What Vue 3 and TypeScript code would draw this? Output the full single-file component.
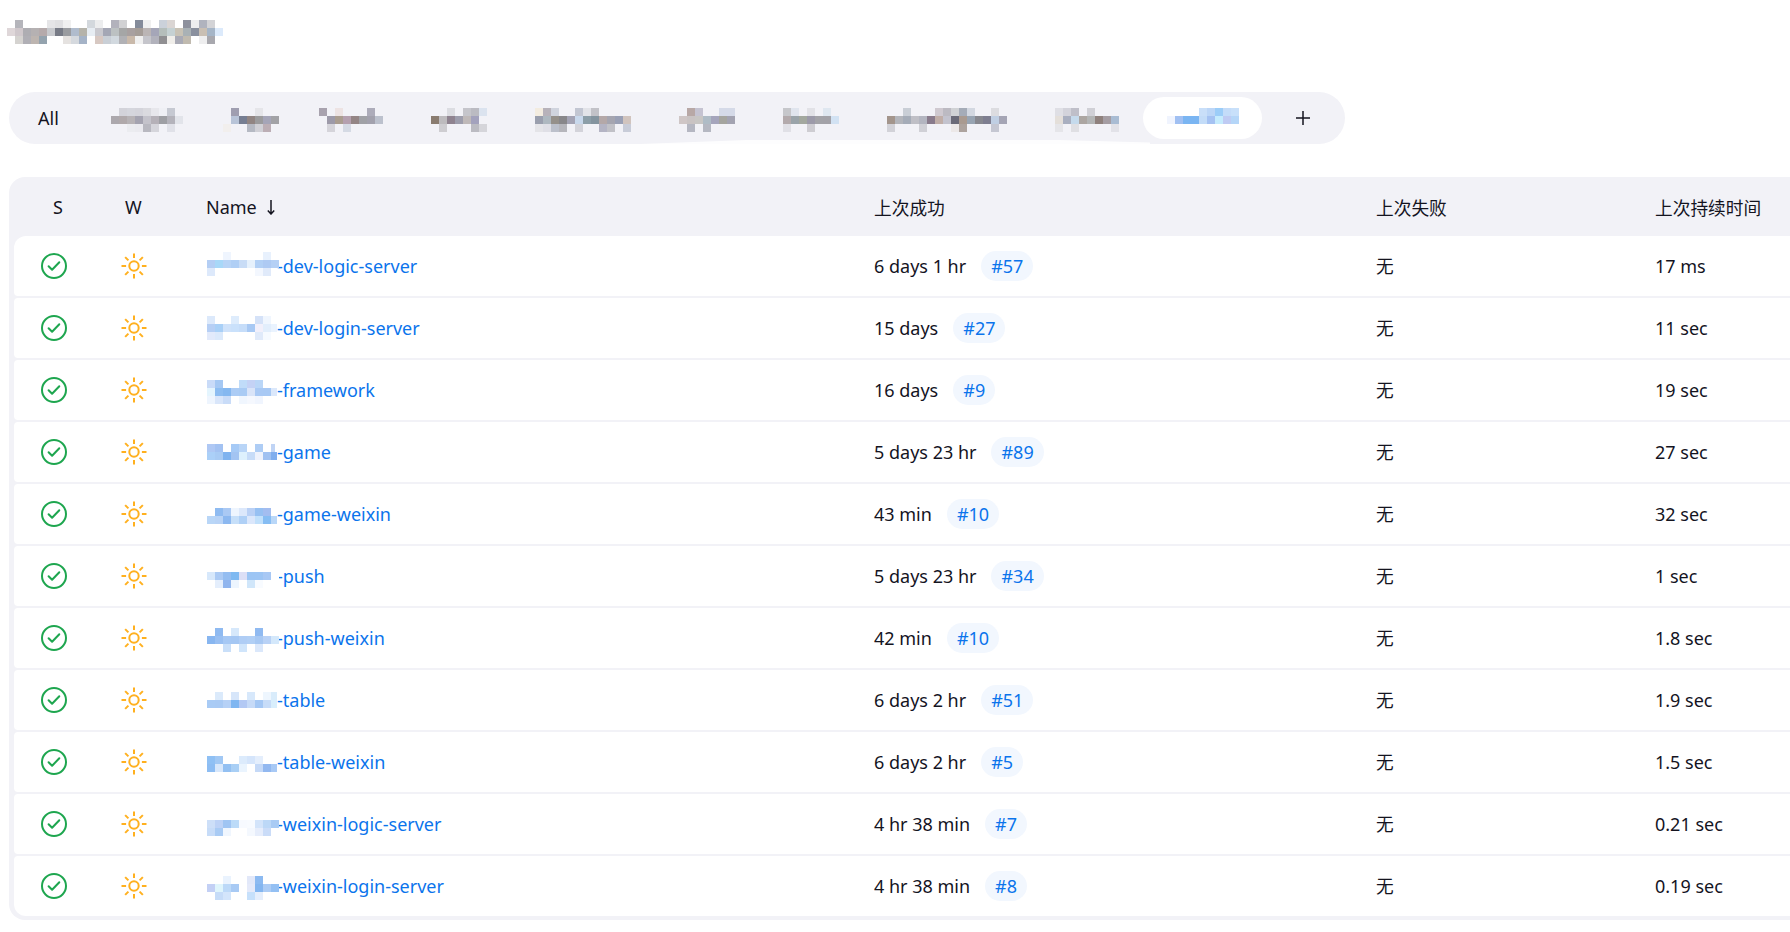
<script setup lang="ts">
interface Cell {
  x: number;
  y: number;
  w: number;
  fill: string;
}

interface Job {
  mosaic: Cell[];
  name: string;
  since: string;
  build: string;
  duration: string;
}

// pixelated patches: one string per row, "-" leaves the block empty, "hex/6" is a cut-off block
const BLOCK = 8;

function toCells(rows: string[], top = 0): Cell[] {
  const cells: Cell[] = [];
  rows.forEach((row, r) => {
    row.split(" ").forEach((token, c) => {
      if (token === "-") return;
      const [fill, w] = token.split("/");
      cells.push({x: c * BLOCK, y: top + r * BLOCK, w: w ? Number(w) : BLOCK, fill: "#" + fill});
    });
  });
  return cells;
}

const titleCells = toCells([
  "- b5b5bb - - - e5e5e7 e0e0e2 f0f0f0 - - d3d8dd ecedee - b2b2bc d1d1d3 - 848b9a f0f0f0 - cbd1da dad5d3 - 8e919d eeeeef b0b3be d3d3d6 -",
  "dfd7d9 d0c8cc aeadb2 b5b1b2 b5aaab c7c9cd 777b86 9a9ca0 b0bccd b5b3aa e7edf3 c9c9cf a4a7b5 bcc1c2 a5a6a6 a8a0a0 a59d98 bbb5b5 a5a6b8 b5bebb c5d1d3 c8c2b5 a9b1b5 8a909e c9bfb3 a5b5c7 dceafb",
  "- d5d3d0 b0afb5 bdb5b0 94a3ae - - e5e2e0 d5d9de a5b3c7 - d7c8c2 c9cfd6 d2d9df b1b1b5 c9b9aa f0f0f0 c5c5cb b2b2bc 908f92 f0eeea a9aab5 c0baaf - eeeeef a8a8ae -",
]);

const tabs = [
  {
    width: 64,
    cells: toCells([
      "- d3d3da d5d6dd d4d4db dadadf e7e7ec eff0f5 c6c9d2 -",
      "aca8ad b0a9ab b7b3b6 a4a3b0 c4c3cb b5b1b8 9e9fa4 b4b3bb e2e4ea",
      "- - ebecf0 eaeaef b8b8c0 d5d5db - e0e1e8 -",
    ]),
  },
  {
    width: 48,
    cells: toCells([
      "- 9f9eb0 - - e5e5e9 - -",
      "- b8c4d8 767e92 918583 9b9b9d a5a5b8 a2a2a6",
      "f2efed - - b5b9c3 d0d0d6 bcaeb5 -",
    ]),
  },
  {
    width: 64,
    cells: toCells([
      "a8a2ae - ede3e3 - - - adacba -",
      "- 9d9aa9 aa9d90 b5a0af 948585 a0a1a6 a2a1ad bcc1cd",
      "- d5d4da - d5dae4 - - - -",
    ]),
  },
  {
    width: 56,
    cells: toCells([
      "- - dcdde2 - c5c5cb bbbbc2 dbe3ef",
      "8a7c70 bdbbbe 8f8390 9d9dac bfb9b9 a3a2bd -",
      "- cecdd1 - - - bbbbc2 d5d5da",
    ]),
  },
  {
    width: 96,
    cells: toCells([
      "f3ece0 b7b2ba d0d4de - - c2c6d2 e2e3e8 c2c2c8 - - - -",
      "9a9fae aeb8c0 95908a 88878a a3a3b4 c8d8ec 8c9ea8 84949f b4a8a8 a5a5b0 9aa0b5 d1c4be",
      "e4e4e8 dfdfe6 bcc0cb b6b6bc - d3d3da - - b4b4c4 c1c1c7 - c8ccd8",
    ]),
  },
  {
    width: 56,
    cells: toCells([
      "- b8a8a6 c5c3d1 - - d5dae8 d5dae8",
      "cfc6c6 c9c3c3 c8c6c4 afbcc6 a5a5bc a5a59f a3a3b1",
      "- b5b7c2 - b5b8c2 - - -",
    ]),
  },
  {
    width: 56,
    cells: toCells([
      "c6c7cb e0e5ee - e2e2e7 - dfe7f0 -",
      "b3aaac 9aa4aa a3a89f 9c9aa9 a3a3a8 a3a2a8 d2e2f3",
      "e0e0e6 - - cecdd2 - - -",
    ]),
  },
  {
    width: 120,
    cells: toCells([
      "- - c9ced6 - - - cfc9d0 bcbac2 d0d2d5 a5acb8 d3d8e1 - - dcdce0 -",
      "a3958c b3b5bb a5acb8 bfbfc6 b3b5c0 897b8c c0aea8 c3c3ce 6a6a78 a99a90 98a4b2 87888f 7e7e90 c0cfe3 a5a5b5",
      "d2d2d8 - - - d0d0d6 - - - ece8e8 ada39e - - - c5c7d2 -",
    ]),
  },
  {
    width: 64,
    cells: toCells([
      "dfdfe5 d3d3db bfbfc9 - d0d0d6 - - -",
      "e4dfda a9afc0 c5daec aca6a2 b3b5b5 8f817d a59da3 a9bcd3",
      "e5e5e9 - dfdfe3 - - - - e2e2e8",
    ]),
  },
  {
    width: 72,
    active: true,
    cells: toCells([
      "- - - - c9dff9 bcd6f7 9ccdf8 c4dcf9 c8e0fa",
      "f0f4fe a1c0f2 7ab5f2 7ab5f2 c3dcf8 a5c2f2 c5ebfd bfcbf3 b5d6f8",
    ]),
  },
];

const jobs: Job[] = [
  {
    name: "dev-logic-server", since: "6 days 1 hr", build: "#57", duration: "17 ms",
    mosaic: toCells([
      "- - eff5fe - - - - e8f1fd -",
      "b4cef4 a8d8f8 b8d4f6 b0cff5 c8dcf6 e6f1fc b2d0f5 aecaf3 b5d0f5",
      "dde9fb - - - - - f3f7fe e0eafa -",
    ], 16),
  },
  {
    name: "dev-login-server", since: "15 days", build: "#27", duration: "11 sec",
    mosaic: toCells([
      "dce9fb - - deecfc - - d5e2f8 f0f6fe -",
      "b6cff5 a9d0f7 cfe2fa cae1fb c6ddf9 a8c9f4 f2f0fb e2eefc eaf3fe/6",
      "e2eafb dbe9fb - - - - e0eafa f6faff -",
    ], 18),
  },
  {
    name: "framework", since: "16 days", build: "#9", duration: "19 sec",
    mosaic: toCells([
      "c9dbf8 a5c8f3 - - c0dcf9 c4d2f5 bad6f7 - -",
      "e4f5fe 8dbdf1 85b8f0 acccf5 a9cbf4 d9e4f8 a9c9f4 a8c9f4 dbe8fb/6",
      "eef5fe d9e6fa c9dcf8 - f0f6fe f5f8fe f0f5fe - -",
    ], 20),
  },
  {
    name: "game", since: "5 days 23 hr", build: "#89", duration: "27 sec",
    mosaic: toCells([
      "afc8f4 a3c2f2 - a6caf6 b9d5f7 - aecdf5 - c0d4f5/4",
      "abd0f8 a8cbf4 7fb3ef a3c4f2 def1fd c7dcf8 eef2fc a0c1f1 80aeee/6",
    ], 22),
  },
  {
    name: "game-weixin", since: "43 min", build: "#10", duration: "32 sec",
    mosaic: toCells([
      "- 8fbbf1 aac9f4 eef5fe dce8fb b9d0f5 96c0f2 a3bdf0 -",
      "b9d6f7 b8d3f6 8cb8f0 c6dff9 afd0f6 dbe7fb c1e0fb 86bdf3 b9d7f8/6",
    ], 24),
  },
  {
    name: "push", since: "5 days 23 hr", build: "#34", duration: "1 sec",
    mosaic: toCells([
      "d7e8fb abcaf4 94bdf1 7fb9f1 dcdff6 9cc5f4 9dc5f4 a8c8f4 ffffff",
      "- e4eefc 90b5ee edf5fe - d0e6fa f8fbff - -",
    ], 26),
  },
  {
    name: "push-weixin", since: "42 min", build: "#10", duration: "1.8 sec",
    mosaic: toCells([
      "- 8fbaf1 - d6e8fb - - 90baf1 - -",
      "88b6f0 98bff2 a6c8f4 a5c7f3 afcdf5 b1cff5 a7c8f3 b9d2f6 d4e8fb",
      "- - c9dff9 - d0e5fb - dbe8fb - -",
    ], 20),
  },
  {
    name: "table", since: "6 days 2 hr", build: "#51", duration: "1.9 sec",
    mosaic: toCells([
      "- dbeafb - d7e6fa - d7e8fb - eef6fe d9ecfb/6",
      "a9cbf5 a9caf4 b6d1f6 7fb6f1 b3c9f4 c6daf7 a4c7f4 c7dcf8 d8eefc/6",
    ], 22),
  },
  {
    name: "table-weixin", since: "6 days 2 hr", build: "#5", duration: "1.5 sec",
    mosaic: toCells([
      "8fc0f4 a1c8f4 - - dcebfc d5e5fb e4eefc - -",
      "8dbdf3 d7e7fb 93c0f2 a9cff5 eaf4fe - c5d9f7 92b8f0 a8c9f5/6",
    ], 24),
  },
  {
    name: "weixin-logic-server", since: "4 hr 38 min", build: "#7", duration: "0.21 sec",
    mosaic: toCells([
      "cddff8 bdd2f6 a0c5f3 bcdbf8 f7faff f8fbff d3e4fa bcd8f7 a9cbf4",
      "c7dcf8 a9cbf4 f0f6fe - - f4f8fe e6edfb cadcf8 -",
    ], 26),
  },
  {
    name: "weixin-login-server", since: "4 hr 38 min", build: "#8", duration: "0.19 sec",
    mosaic: toCells([
      "- - eaf3fe - - e2e8f9 8cbaf1 - -",
      "c3d0f5 dff5fc bcd9f8 a8caf4 - e5eafa 84b6f0 acccf5 94c0f3",
      "- c6dcf8 d3e5fb - - c6e0fb e5eefc - -",
    ], 20),
  },
];

const sunRays = [0, 45, 90, 135, 180, 225, 270, 315];
</script>

<template>
  <div class="page">
    <svg class="title" width="216" height="24">
      <rect v-for="c in titleCells" :key="`${c.x}-${c.y}`" :x="c.x" :y="c.y" :width="c.w" height="8" :fill="c.fill" />
    </svg>

    <nav class="tabs">
      <div class="tab tab-all">All</div>
      <div v-for="(tab, i) in tabs" :key="i" class="tab" :class="{active: tab.active}">
        <svg class="tab-mosaic" :width="tab.width" height="24">
          <rect v-for="c in tab.cells" :key="`${c.x}-${c.y}`" :x="c.x" :y="c.y" :width="c.w" height="8" :fill="c.fill" />
        </svg>
      </div>
      <div class="tab-add">
        <svg width="16" height="16" viewBox="0 0 16 16">
          <path d="M8 1v14M1 8h14" stroke="#14141f" stroke-width="1.5" fill="none" />
        </svg>
      </div>
      <div class="tabs-smear"></div>
    </nav>

    <section class="table">
      <div class="grid head">
        <div class="head-s">S</div>
        <div class="head-w">W</div>
        <div class="head-name">
          Name
          <svg width="8" height="16" viewBox="0 0 8 16">
            <path d="M4 1v14M0.8 11.5L4 15l3.2-3.5" stroke="#14141f" stroke-width="1.5" fill="none" />
          </svg>
        </div>
        <div class="cjk">上次成功</div>
        <div class="cjk">上次失败</div>
        <div class="cjk">上次持续时间</div>
      </div>

      <div v-for="job in jobs" :key="job.name" class="grid row">
        <div class="icon-cell">
          <svg width="26" height="26" viewBox="0 0 26 26" fill="none" stroke="#1ea64f" stroke-width="2">
            <circle cx="13" cy="13" r="12" />
            <path d="M7.6 13.2l3.5 3.6 7.2-7.6" stroke-linecap="round" stroke-linejoin="round" />
          </svg>
        </div>
        <div class="icon-cell">
          <svg width="26" height="26" viewBox="0 0 26 26" fill="none" stroke="#ffb01f" stroke-width="2">
            <circle cx="13" cy="13" r="4.7" />
            <path
              v-for="deg in sunRays"
              :key="deg"
              d="M13 0.5v4.6"
              :transform="`rotate(${deg} 13 13)`"
              stroke-linecap="butt"
            />
          </svg>
        </div>
        <a class="job-name">
          <svg class="name-mosaic" width="72" height="60">
            <rect v-for="c in job.mosaic" :key="`${c.x}-${c.y}`" :x="c.x" :y="c.y" :width="c.w" height="8" :fill="c.fill" />
          </svg>
          <span>-{{ job.name }}</span>
        </a>
        <div class="since">
          {{ job.since }}
          <span class="badge">{{ job.build }}</span>
        </div>
        <div class="cjk none">无</div>
        <div>{{ job.duration }}</div>
      </div>
    </section>
  </div>
</template>

<style>
body {
  background: #fff;
  overflow: hidden;
}
</style>

<style scoped>
.page {
  padding: 20px 0 12px 9px;
  color: #14141f;
  font-family: "Noto Sans", "Noto Sans CJK SC", sans-serif;
  font-size: 18px;
}

.title {
  display: block;
  margin-left: -2px;
}

.tabs {
  position: relative;
  display: flex;
  align-items: center;
  width: 1336px;
  height: 52px;
  margin-top: 48px;
  border-radius: 26px;
  background: #f2f2f7;
}

.tab {
  display: flex;
  align-items: center;
  height: 42px;
  padding: 0 24px;
  border-radius: 21px;
}

.tab-all {
  padding: 0 28px 0 29px;
}

.tab.active {
  padding: 0 23px 0 24px;
  background: #fff;
}

.tab-mosaic {
  display: block;
  margin-top: 4px;
  overflow: visible;
}

.tab-add {
  display: flex;
  flex: 1;
  justify-content: center;
}

.tabs-smear {
  position: absolute;
  left: 631px;
  bottom: 0;
  width: 510px;
  height: 4px;
  background: rgba(255, 255, 255, 0.85);
  clip-path: polygon(0 100%, 21% 0, 82% 0, 100% 60%, 100% 100%);
}

.table {
  margin-top: 33px;
  padding: 0 0 4px 5px;
  border-radius: 16px 0 0 16px;
  background: #f2f2f7;
}

.grid {
  display: grid;
  grid-template-columns: 80px 112px 668px 502px 279px 1fr;
  align-items: center;
}

.head {
  height: 59px;
}

.head-s {
  padding-left: 39px;
}

.head-w {
  padding-left: 31px;
}

.head-name {
  display: flex;
  align-items: center;
  gap: 10px;
}

.cjk {
  font-size: 17.7px;
  font-weight: 400;
}

.none {
  padding-bottom: 2px;
}

.row {
  height: 60px;
  margin-bottom: 2px;
  background: #fff;
  border-radius: 4px 0 0 4px;
}

.row:last-child {
  margin-bottom: 0;
  border-bottom-left-radius: 12px;
}

.head + .row {
  border-top-left-radius: 12px;
}

.icon-cell {
  display: flex;
  padding-left: 27px;
}

.job-name {
  display: flex;
  align-items: center;
  color: #0b74ec;
}

.name-mosaic {
  position: relative;
  flex: none;
  width: 72px;
  margin: 0 -2px 0 1px;
}

.since {
  display: flex;
  align-items: center;
  gap: 15px;
}

.badge {
  height: 30px;
  padding: 0 10px;
  border-radius: 15px;
  background: #f2f7fe;
  color: #0b74ec;
  line-height: 30px;
}
</style>
